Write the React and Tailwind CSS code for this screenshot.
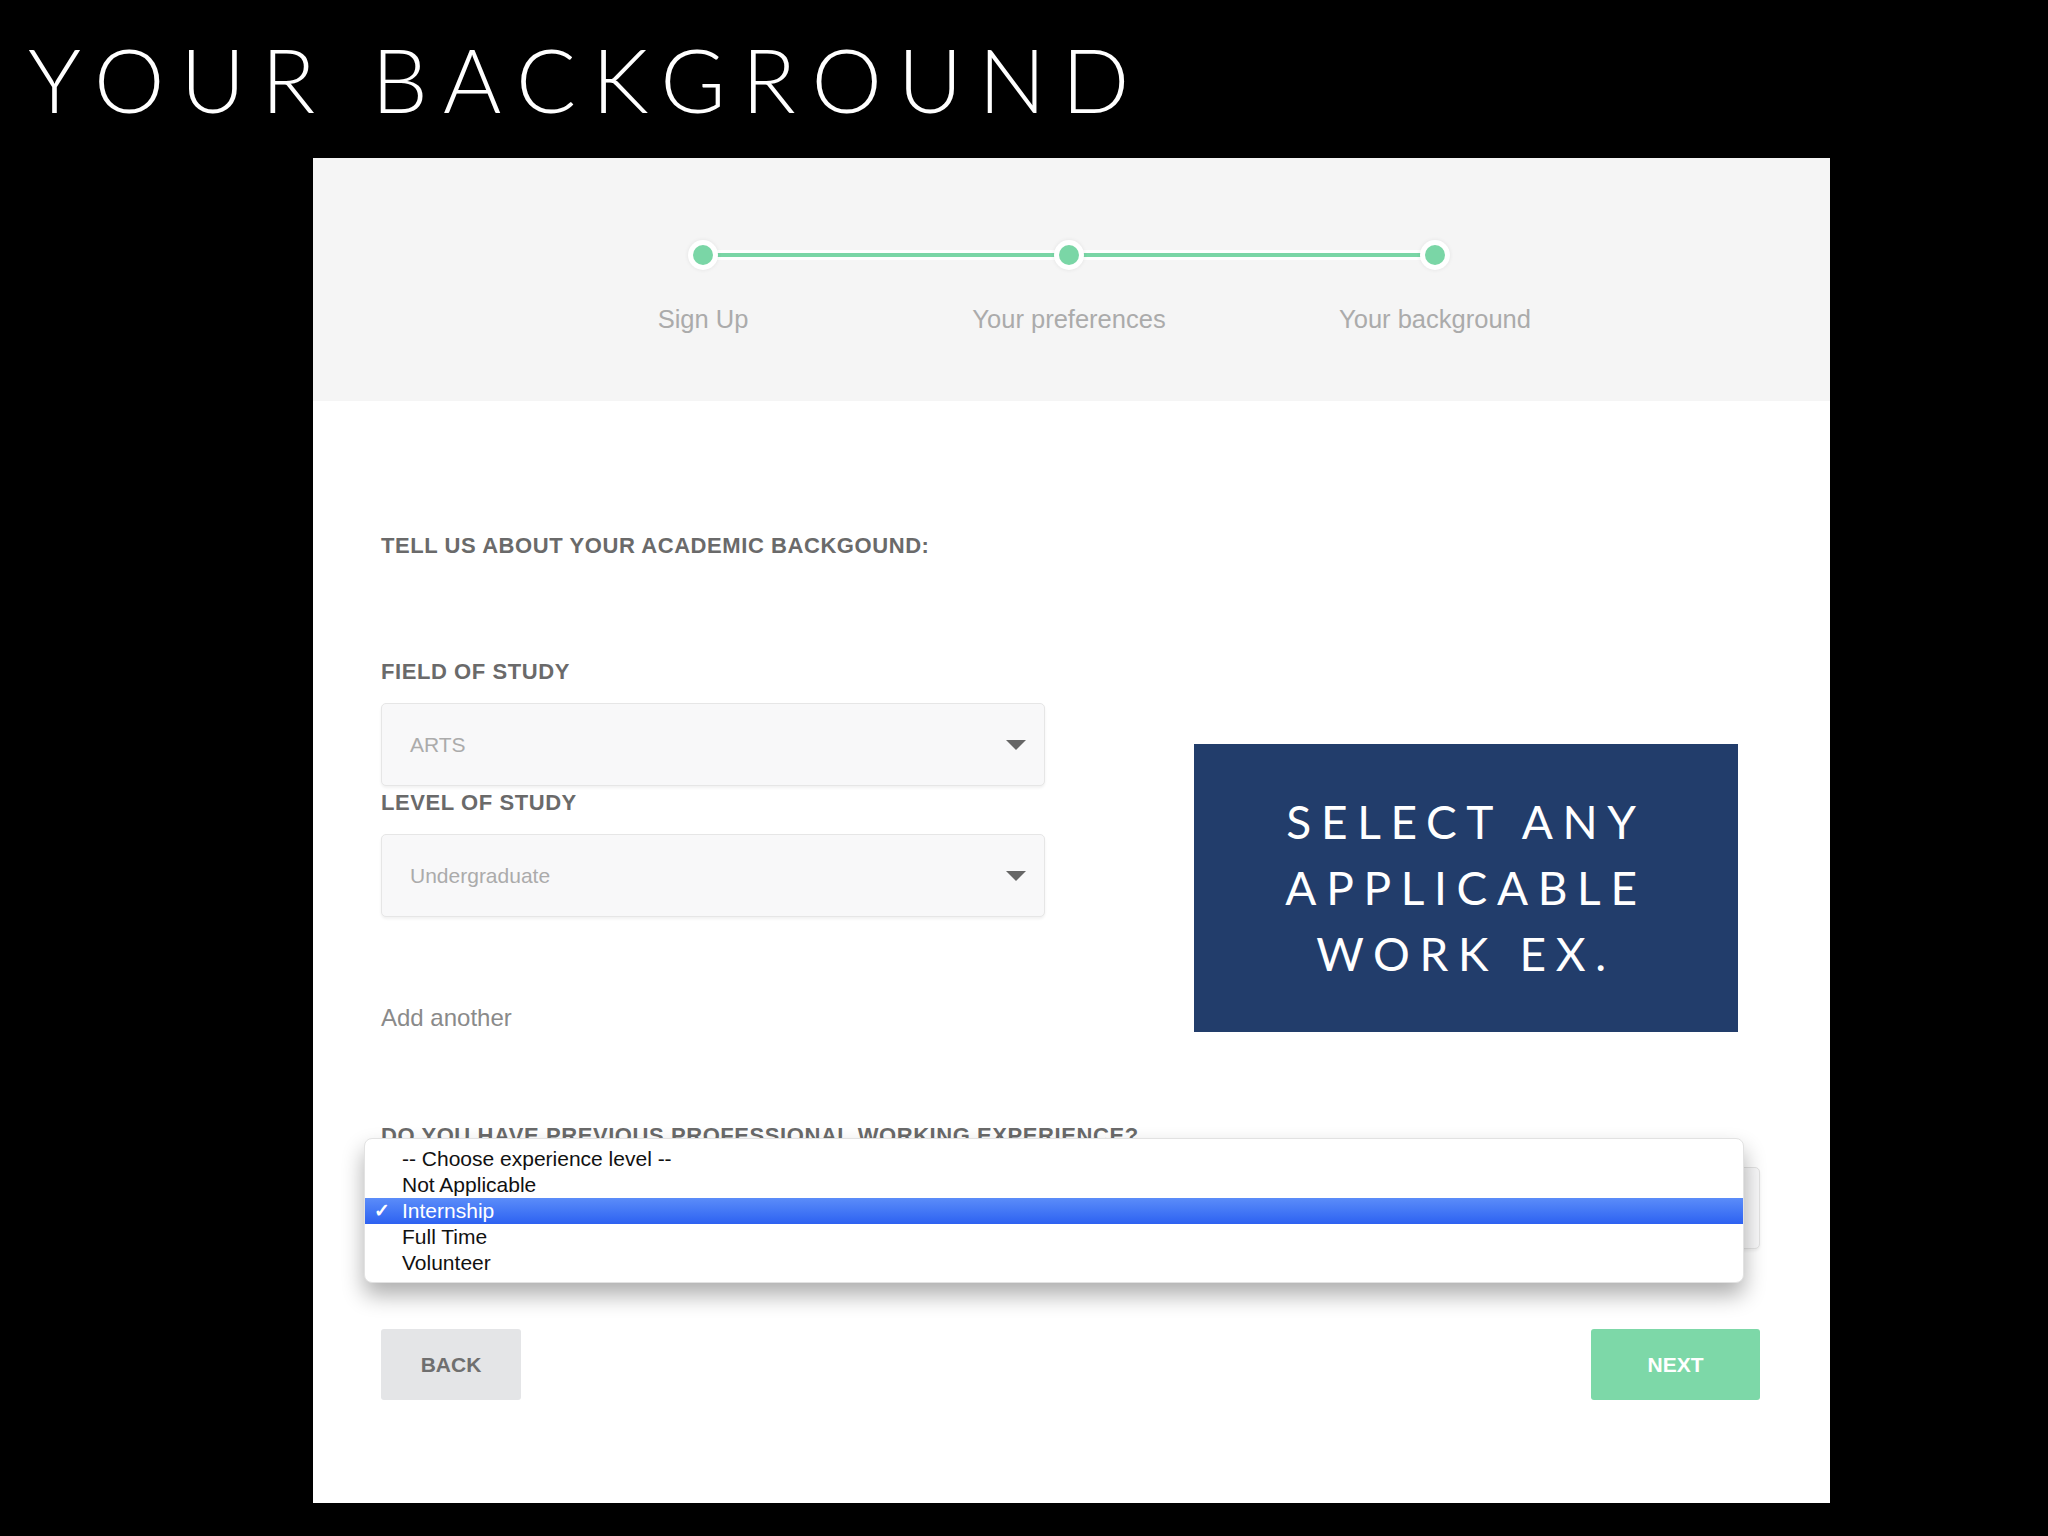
import React from 'react';

const sans = { fontFamily: '"Liberation Sans", Arial, sans-serif' };

function Caret() {
    return (
        <svg width="20" height="10" viewBox="0 0 20 10" className="shrink-0">
            <path d="M0 0 L20 0 L10 10 Z" fill="#666666" />
        </svg>
    );
}

function Select({ value }) {
    return (
        <div className="h-[83px] w-full rounded-[5px] border border-[#e6e6e6] bg-[#f8f8f9] shadow-[0_2px_3px_rgba(0,0,0,0.06)] flex items-center justify-between pl-[28px] pr-[18px]">
            <span className="text-[21px] text-[#ababab]">{value}</span>
            <Caret />
        </div>
    );
}

function Dot() {
    return (
        <div className="w-[30px] h-[30px] rounded-full bg-white shadow-[0_0_4px_rgba(0,0,0,0.08)] flex items-center justify-center shrink-0 z-10">
            <div className="w-[20px] h-[20px] rounded-full bg-[#7ad6a6]" />
        </div>
    );
}

function Line() {
    return (
        <div className="flex-1 h-[10px] bg-white flex items-center -mx-[2px]">
            <div className="w-full h-[4px] bg-[#7ad6a6]" />
        </div>
    );
}

export default function App() {
    const options = ['-- Choose experience level --', 'Not Applicable', 'Internship', 'Full Time', 'Volunteer'];
    const label = 'text-[22px] leading-[26px] font-bold text-[#6a6a6a] tracking-[0.026em]';

    return (
        <div className="w-[2048px] h-[1536px] bg-black overflow-hidden flex flex-col">
            <div className="h-[158px] pt-[34px] pl-[28px] shrink-0">
                <h1 className="text-white text-[89px] leading-[89px] font-light tracking-[0.18em] whitespace-nowrap" style={{ fontFamily: 'Lato, "Open Sans", sans-serif' }}>
                    YOUR BACKGROUND
                </h1>
            </div>

            <div className="ml-[313px] w-[1517px] h-[1345px] bg-white flex flex-col" style={sans}>
                <div className="h-[243px] bg-[#f5f5f5] shrink-0 pt-[82px]">
                    <div className="ml-[375px] w-[762px] flex items-center">
                        <Dot />
                        <Line />
                        <Dot />
                        <Line />
                        <Dot />
                    </div>
                    <div className="ml-[207px] w-[1098px] grid grid-cols-3 mt-[34px] text-center text-[25.5px] leading-[30px] text-[#ababab]">
                        <span>Sign Up</span>
                        <span>Your preferences</span>
                        <span>Your background</span>
                    </div>
                </div>

                <div className="pl-[68px] pr-[70px] flex flex-col">
                    <div className="flex items-start mt-[132px]">
                        <div className="w-[664px] flex flex-col">
                            <h2 className={label}>TELL US ABOUT YOUR ACADEMIC BACKGOUND:</h2>
                            <label className={`mt-[100px] ${label}`}>FIELD OF STUDY</label>
                            <div className="mt-[18px]"><Select value="ARTS" /></div>
                            <label className={`mt-[4px] ${label}`}>LEVEL OF STUDY</label>
                            <div className="mt-[18px]"><Select value="Undergraduate" /></div>
                            <span className="mt-[87px] text-[24px] leading-[28px] text-[#8a8a8a]">Add another</span>
                        </div>
                        <div className="ml-[149px] mt-[211px] w-[544px] h-[288px] bg-[#223d6b] flex flex-col items-center justify-center text-white text-[46px] leading-[66px] tracking-[0.21em]" style={{ fontFamily: 'Lato, "Open Sans", sans-serif' }}>
                            <span>SELECT ANY</span>
                            <span>APPLICABLE</span>
                            <span>WORK EX.</span>
                        </div>
                    </div>

                    <div className="relative mt-[91px]">
                        <label className={`block ${label}`}>DO YOU HAVE PREVIOUS PROFESSIONAL WORKING EXPERIENCE?</label>
                        <div className="mt-[18px] h-[82px] rounded-[5px] border border-[#e3e3e3] bg-[#f8f8f9] shadow-[0_2px_3px_rgba(0,0,0,0.06)]" />

                        <div className="absolute top-[15px] -left-[17px] w-[1380px] h-[145px] rounded-[8px] bg-white border border-[#e2e2e2] shadow-[0_12px_22px_rgba(0,0,0,0.32)] pt-[7px] flex flex-col z-20">
                            {options.map((o, i) => (
                                <div key={i} className={`h-[26px] flex items-center relative pl-[37px] text-[21px] ${i === 2 ? 'bg-gradient-to-b from-[#5b8cf9] to-[#2d61f1] text-white' : 'text-[#111111]'}`}>
                                    {i === 2 && <span className="absolute left-[9px] text-[19px] font-bold">✓</span>}
                                    {o}
                                </div>
                            ))}
                        </div>
                    </div>

                    <div className="mt-[80px] flex justify-between">
                        <button className="w-[140px] h-[71px] rounded-[3px] bg-[#e4e5e7] text-[#6f6f6f] text-[21px] font-bold">BACK</button>
                        <button className="w-[169px] h-[71px] rounded-[3px] bg-[#7dd8a8] text-white text-[21px] font-bold">NEXT</button>
                    </div>
                </div>
            </div>
        </div>
    );
}
